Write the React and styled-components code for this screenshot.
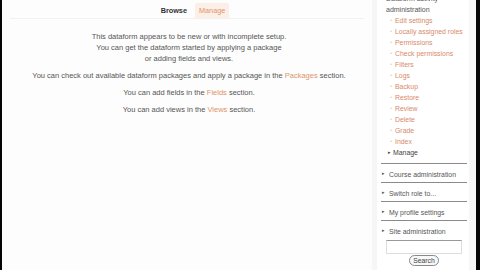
import React from "react";
import styled, { createGlobalStyle } from "styled-components";

const GlobalStyle = createGlobalStyle`
  html, body {
    margin: 0;
    padding: 0;
    background: #ffffff;
    font-family: "Liberation Sans", Arial, sans-serif;
  }
`;

const Page = styled.div`
  display: flex;
  width: 480px;
  height: 270px;
  overflow: hidden;
  background: #ffffff;
`;

const Edge = styled.div`
  width: ${(p) => p.w}px;
  background: #050505;
  flex-shrink: 0;
`;

const Main = styled.div`
  flex: 1;
  display: flex;
  flex-direction: column;
  align-items: center;
  padding: 3px 8px 0 8px;
  background: #fdfdfd;
`;

const Tabs = styled.div`
  display: flex;
  justify-content: center;
  gap: 4px;
  width: 100%;
  border-bottom: 1px solid #f1f1f1;
  padding-left: 12px;
  box-sizing: border-box;
`;

const Tab = styled.div`
  font-size: 7.3px;
  height: 15px;
  line-height: 16px;
  padding: 0 4px;
  font-weight: ${(p) => (p.active ? "bold" : "normal")};
  color: ${(p) => (p.active ? "#333" : "#e0946a")};
  background: ${(p) => (p.active ? "transparent" : "#fbefe8")};
  border-radius: 2px 2px 0 0;
`;

const Body = styled.div`
  display: flex;
  flex-direction: column;
  align-items: center;
  padding-top: 12px;
  padding-left: 4px;
  gap: 6px;
`;

const Para = styled.p`
  margin: 0;
  font-size: 7.5px;
  line-height: 11px;
  color: #555;
  text-align: center;
`;

const Link = styled.a`
  color: #e0946a;
  text-decoration: none;
`;

const Sidebar = styled.div`
  width: 104px;
  flex-shrink: 0;
  background: #f6f6f6;
  padding: 0 7px 0 5px;
  box-sizing: border-box;
`;

const Block = styled.div`
  background: #ffffff;
  margin-top: -7px;
  padding: 0 2px 0 4px;
  height: 290px;
`;

const Heading = styled.div`
  font-size: 7px;
  line-height: 11px;
  color: #555;
  padding-left: 5px;
`;

const List = styled.ul`
  list-style: none;
  margin: 0 0 5px 0;
  padding: 0 0 0 14px;
`;

const Item = styled.li`
  font-size: 6.9px;
  line-height: 11px;
  color: ${(p) => (p.plain ? "#444" : "#d8896a")};
  position: relative;
  margin-left: ${(p) => (p.plain ? "-2px" : "0")};
  &::before {
    content: "${(p) => (p.plain ? "\u25B8" : "\u2022")}";
    color: ${(p) => (p.plain ? "#444" : "#d6d6d6")};
    font-size: ${(p) => (p.plain ? "5px" : "6px")};
    position: absolute;
    left: -5px;
  }
`;

const Section = styled.div`
  border-top: 1px solid #8a8a8a;
  padding: 5px 0 2px 8px;
  font-size: 6.9px;
  line-height: 11px;
  color: #555;
  position: relative;
  &::before {
    content: "\u25B8";
    font-size: 5px;
    position: absolute;
    left: 1px;
    top: 4px;
  }
`;

const SearchBox = styled.div`
  display: flex;
  flex-direction: column;
  align-items: center;
  gap: 1px;
  padding-top: 1px;
`;

const Input = styled.div`
  width: 74px;
  height: 12px;
  border: 1px solid #ddd;
  border-top-color: #999;
  background: #fff;
`;

const Button = styled.button`
  font-family: "Liberation Sans", Arial, sans-serif;
  font-size: 6.8px;
  color: #444;
  background: #f8f8f8;
  border: 1px solid #888;
  border-radius: 6px;
  padding: 0 3px;
  height: 11px;
  line-height: 9px;
`;

const items = [
  "Edit settings",
  "Locally assigned roles",
  "Permissions",
  "Check permissions",
  "Filters",
  "Logs",
  "Backup",
  "Restore",
  "Review",
  "Delete",
  "Grade",
  "Index",
];

export default function App() {
  return (
    <Page>
      <GlobalStyle />
      <Edge w={2} />
      <Main>
        <Tabs>
          <Tab active>Browse</Tab>
          <Tab>Manage</Tab>
        </Tabs>
        <Body>
          <Para>
            This dataform appears to be new or with incomplete setup.
            <br />
            You can get the dataform started by applying a package
            <br />
            or adding fields and views.
          </Para>
          <Para>
            You can check out available dataform packages and apply a package in the{" "}
            <Link>Packages</Link> section.
          </Para>
          <Para>
            You can add fields in the <Link>Fields</Link> section.
          </Para>
          <Para>
            You can add views in the <Link>Views</Link> section.
          </Para>
        </Body>
      </Main>
      <Sidebar>
        <Block>
          <Heading>
            Dataform activity
            <br />
            administration
          </Heading>
          <List>
            {items.map((t) => (
              <Item key={t}>{t}</Item>
            ))}
            <Item plain>Manage</Item>
          </List>
          <Section>Course administration</Section>
          <Section>Switch role to...</Section>
          <Section>My profile settings</Section>
          <Section>Site administration</Section>
          <SearchBox>
            <Input />
            <Button>Search</Button>
          </SearchBox>
        </Block>
      </Sidebar>
      <Edge w={4} />
    </Page>
  );
}
